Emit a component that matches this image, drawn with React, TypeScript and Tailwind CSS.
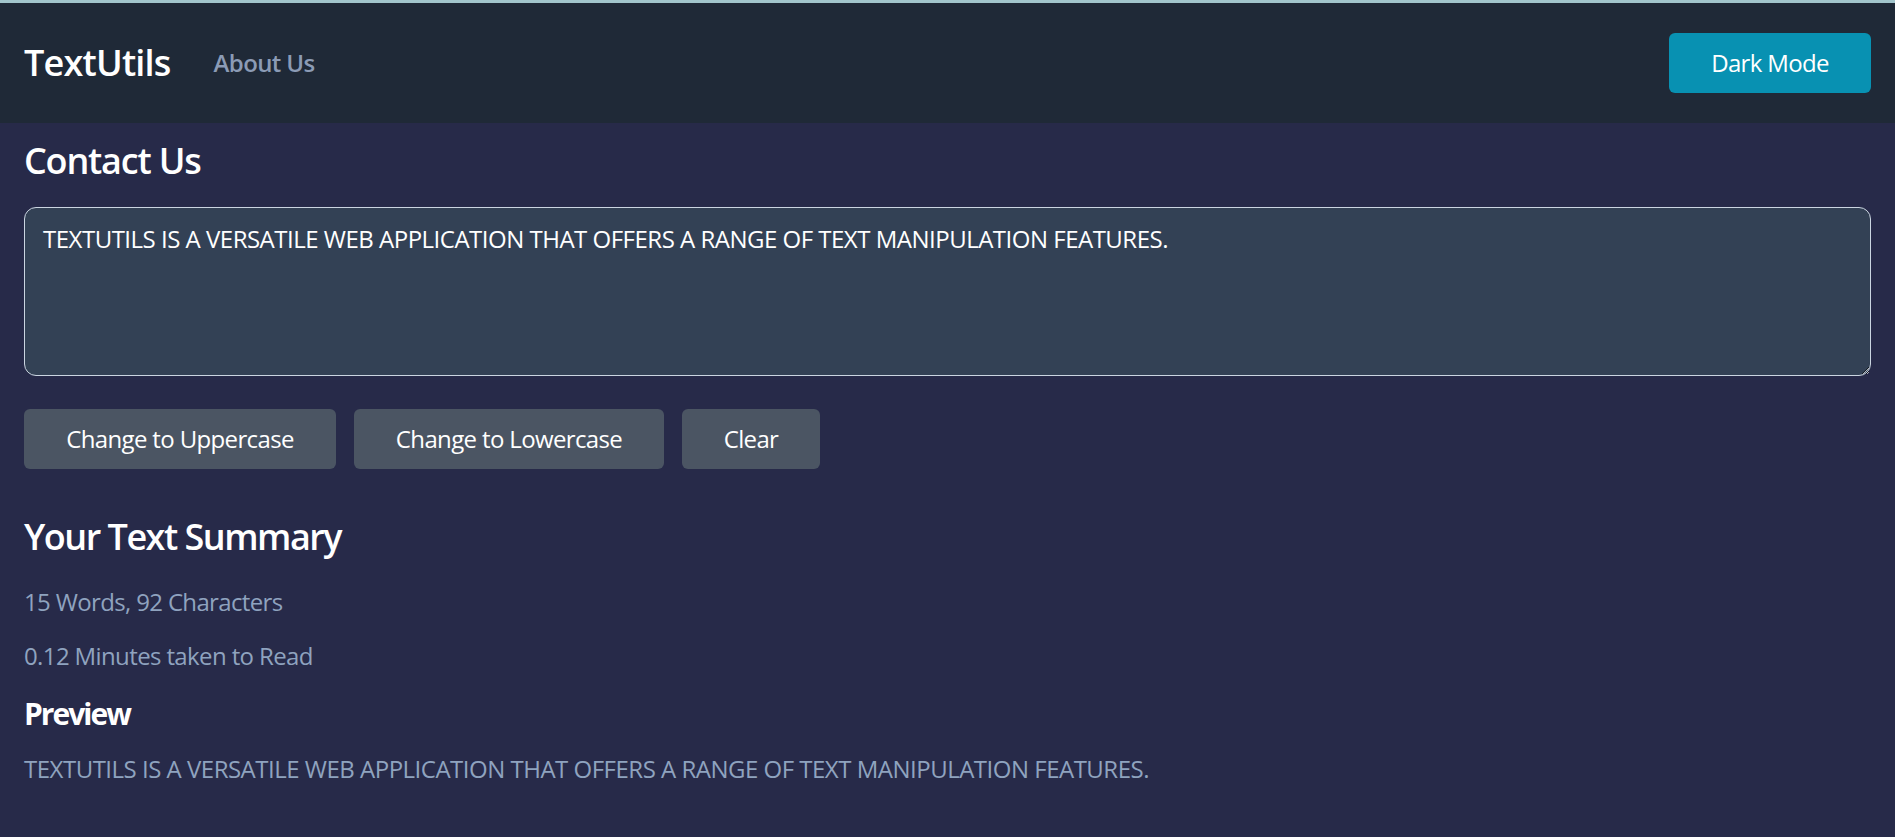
import React, { useState } from "react";

export default function App() {
  const [text, setText] = useState(
    "TEXTUTILS IS A VERSATILE WEB APPLICATION THAT OFFERS A RANGE OF TEXT MANIPULATION FEATURES."
  );
  return (
    <div className="min-h-screen bg-[#272a49] font-['Open_Sans','Noto_Sans',sans-serif]">
      <div className="h-[3px] bg-[#a2c5cc]" />
      <nav className="h-[120px] bg-[#1f2937] flex items-center justify-between px-[24px]">
        <div className="flex items-center">
          <span className="text-[36px] leading-[54px] font-semibold tracking-[-0.8px] text-white">TextUtils</span>
          <a className="ml-[43px] text-[24px] leading-[36px] font-semibold tracking-[-0.6px] text-[#8b9bb5]">About Us</a>
        </div>
        <button className="w-[202px] h-[60px] rounded-[6px] bg-[#0891b2] text-white text-[24px] tracking-[-0.65px]">
          Dark Mode
        </button>
      </nav>
      <main className="px-[24px]">
        <h1 className="pt-[11px] text-[36px] leading-[54px] font-semibold tracking-[-1.2px] text-white">Contact Us</h1>
        <textarea
          value={text}
          onChange={(e) => setText(e.target.value)}
          className="mt-[19px] block w-full h-[169px] rounded-[12px] border border-[#cbd5e1] bg-[#334155] text-white text-[24px] leading-[36px] tracking-[-0.5px] px-[18px] pt-[13px] pb-[12px] outline-none"
        />
        <div className="mt-[33px] flex gap-[18px]">
          <button className="w-[312px] h-[60px] rounded-[6px] bg-[#4b5563] text-white text-[24px] tracking-[-0.64px]">
            Change to Uppercase
          </button>
          <button className="w-[310px] h-[60px] rounded-[6px] bg-[#4b5563] text-white text-[24px] tracking-[-0.64px]">
            Change to Lowercase
          </button>
          <button className="w-[138px] h-[60px] rounded-[6px] bg-[#4b5563] text-white text-[24px] tracking-[-0.64px]">
            Clear
          </button>
        </div>
        <h2 className="mt-[41px] text-[36px] leading-[54px] font-semibold tracking-[-1.5px] text-white">Your Text Summary</h2>
        <p className="mt-[20px] text-[24px] leading-[36px] tracking-[-0.65px] text-[#8fa3bf]">
          15 Words, 92 Characters
        </p>
        <p className="mt-[18px] text-[24px] leading-[36px] tracking-[-0.62px] text-[#8fa3bf]">0.12 Minutes taken to Read</p>
        <h3 className="mt-[17px] text-[30px] leading-[45px] font-bold tracking-[-2px] text-white">Preview</h3>
        <p className="mt-[15px] text-[24px] leading-[36px] tracking-[-0.5px] text-[#8fa3bf]">{text}</p>
      </main>
    </div>
  );
}
